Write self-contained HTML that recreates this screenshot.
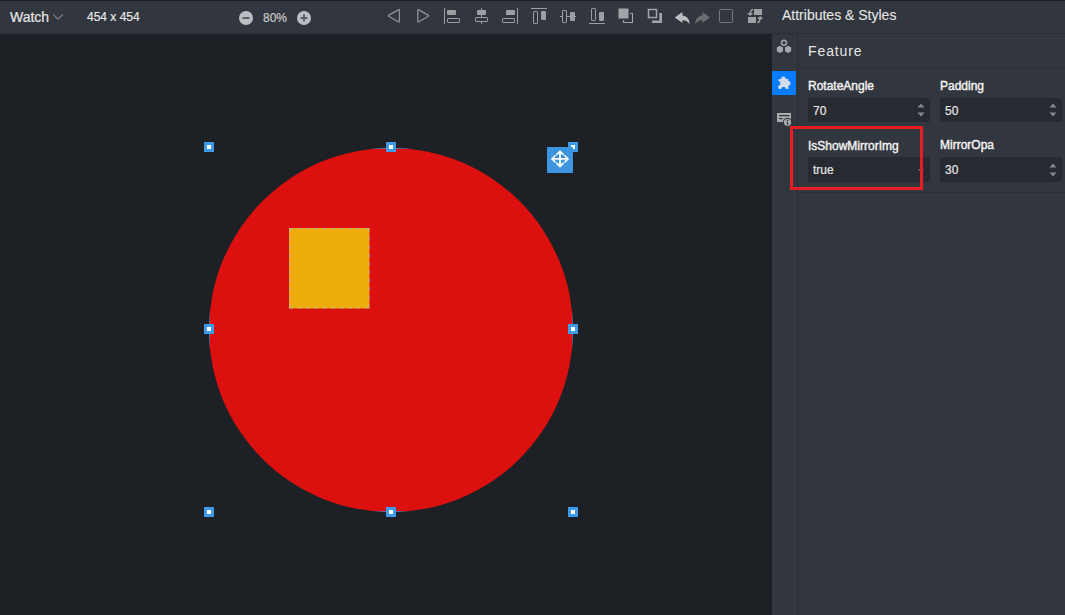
<!DOCTYPE html>
<html><head><meta charset="utf-8">
<style>
*{margin:0;padding:0;box-sizing:border-box}
html,body{width:1065px;height:615px;overflow:hidden;background:#1d2024;font-family:"Liberation Sans",sans-serif;position:relative}
.abs{position:absolute}
#topline{left:0;top:0;width:1065px;height:1px;background:#1e1e1c}
#toolbar{left:0;top:1px;width:1065px;height:32px;background:#32363e}
#tbsep{left:0;top:33px;width:1065px;height:1px;background:#2a2d33}
#canvas{left:0;top:34px;width:772px;height:581px;background:#1d2024}
#panel{left:772px;top:34px;width:293px;height:581px;background:#32363e}
#side{left:772px;top:34px;width:25px;height:581px;background:#32363e}
#sidediv{left:797px;top:34px;width:1px;height:581px;background:#2a2d33}
.txt{color:#e6e6e6;white-space:nowrap;-webkit-text-stroke:0.2px currentColor}
.handle{position:absolute;width:10px;height:10px;background:#3d9be9}
.handle::after{content:"";position:absolute;left:3px;top:3px;width:4px;height:4px;background:#fff}
.inp{position:absolute;width:122px;height:24.4px;background:#272a31;border-radius:2px}
.lbl{position:absolute;font-size:12px;color:#f4f4f4;white-space:nowrap;-webkit-text-stroke:0.4px currentColor}
.val{position:absolute;font-size:12px;color:#e6e6e6;white-space:nowrap;-webkit-text-stroke:0.2px currentColor;transform:scaleY(1.12);transform-origin:0 80%}
.hsep{position:absolute;left:798px;width:267px;height:1px;background:#2a2d33}
</style></head><body>
<div class="abs" id="topline"></div>
<div class="abs" id="toolbar"></div>
<div class="abs" id="tbsep"></div>
<div class="abs" id="canvas"></div>
<div class="abs" id="panel"></div>
<div class="abs" id="side"></div>
<div class="abs" id="sidediv"></div>

<!-- toolbar texts -->
<div class="abs txt" style="left:10px;top:9px;font-size:14px;line-height:16px">Watch</div>
<svg class="abs" style="left:52px;top:13px" width="12" height="8" viewBox="0 0 12 8"><path d="M1.2 1.4 L6 6.2 L10.8 1.4" stroke="#7e8186" stroke-width="1.25" fill="none"/></svg>
<div class="abs txt" style="left:87px;top:10px;font-size:12px;line-height:14px">454 x 454</div>
<svg class="abs" style="left:239px;top:11px" width="14" height="14" viewBox="0 0 14 14"><circle cx="7" cy="7" r="7" fill="#bcbec4"/><rect x="3.5" y="6" width="7" height="2" fill="#5a5d63"/></svg>
<div class="abs txt" style="left:263px;top:11px;font-size:12px;line-height:14px;color:#c8c8c8">80%</div>
<svg class="abs" style="left:297px;top:11px" width="14" height="14" viewBox="0 0 14 14"><circle cx="7" cy="7" r="7" fill="#bcbec4"/><rect x="3.5" y="6" width="7" height="2" fill="#5a5d63"/><rect x="6" y="3.5" width="2" height="7" fill="#5a5d63"/></svg>


<svg class="abs" style="left:0;top:0" width="1065" height="34" viewBox="0 0 1065 34">
<g fill="none" stroke="#909296" stroke-width="1.3" stroke-linejoin="round">
<path d="M389.03 16.45 Q387.9 15.8 389.03 15.15 L398.27 9.85 Q399.4 9.2 399.40 10.50 L399.40 21.10 Q399.4 22.4 398.27 21.75 Z"/>
<path d="M418.93 9.85 Q417.8 9.2 417.80 10.50 L417.80 21.10 Q417.8 22.4 418.93 21.75 L428.07 16.45 Q429.2 15.8 428.07 15.15 Z"/>
</g>
<g fill="#9c9ea2">
<rect x="444" y="8" width="1" height="16"/>
<rect x="447" y="10" width="9" height="5" rx="1"/>
<rect x="481" y="8" width="1" height="16"/>
<rect x="477" y="10" width="9" height="5" rx="1"/>
<rect x="517" y="8" width="1" height="16"/>
<rect x="506" y="10" width="9" height="5" rx="1"/>
<rect x="531" y="8" width="16" height="1"/>
<rect x="541" y="11" width="5" height="9" rx="1"/>
<rect x="560" y="16" width="16" height="1"/>
<rect x="570" y="12" width="5" height="9" rx="1"/>
<rect x="589" y="23" width="16" height="1"/>
<rect x="599" y="12" width="5" height="9" rx="1"/>
</g>
<g fill="#32363e" stroke="#9c9ea2" stroke-width="1">
<rect x="447.5" y="18.5" width="12" height="4" rx="0.6"/>
<rect x="475.5" y="17.5" width="12" height="4" rx="0.6"/>
<rect x="502.5" y="18.5" width="12" height="4" rx="0.6"/>
<rect x="533.5" y="11.5" width="4" height="12" rx="0.6"/>
<rect x="562.5" y="10.5" width="4" height="12" rx="0.6"/>
<rect x="591.5" y="8.5" width="4" height="12" rx="0.6"/>
</g>
<rect x="618.5" y="8.5" width="10" height="10" fill="#a2a4a8"/>
<path d="M630.2 13.5 H632.5 V22.5 H623.5 V20" fill="none" stroke="#a2a4a8" stroke-width="1.1"/>
<rect x="648.5" y="9.5" width="8" height="8" fill="none" stroke="#a2a4a8" stroke-width="1.5"/>
<path d="M659.3 13 H662 V23 H652 V20.4 H659.3 Z" fill="#a2a4a8"/>
<path d="M674.8 17.4 L682.4 11.9 L682.4 15.5 C686.5 15.8 689.6 19 689.6 24.2 C688 21.6 686 20.3 682.4 20.2 L682.4 23 Z" fill="#bdbec2"/>
<path d="M710 17.4 L702.4 11.9 L702.4 15.5 C698.3 15.8 695.2 19 695.2 24.2 C696.8 21.6 698.8 20.3 702.4 20.2 L702.4 23 Z" fill="#6b6c70"/>
<rect x="719.5" y="9.5" width="13" height="13" rx="1" fill="none" stroke="#76777b" stroke-width="1"/>
<g fill="#a0a1a5">
<rect x="754" y="9" width="8" height="6"/>
<rect x="748" y="17" width="8" height="6"/>
<path d="M747 13 L753.3 13 L750.1 16.1 Z M763.3 19 L757 19 L760.2 15.9 Z"/>
<path d="M752.9 9.1 Q750.4 10.4 750.1 13.3 M757.5 22.9 Q760 21.6 760.2 18.7" fill="none" stroke="#a0a1a5" stroke-width="1.6"/>
</g>
</svg>

<div class="abs txt" style="left:782px;top:7px;font-size:14px;line-height:16px;-webkit-text-stroke:0.1px">Attributes &amp; Styles</div>

<!-- panel -->
<div class="hsep" style="top:68px"></div>
<div class="abs txt" style="left:808px;top:43px;font-size:14px;line-height:16px;letter-spacing:0.9px;-webkit-text-stroke:0">Feature</div>

<svg class="abs" style="left:772px;top:34px" width="26" height="100" viewBox="772 34 26 100">
<g fill="#a6a7aa">
<path d="M784 39.2 L787.1 41 L787.1 44.5 L784 46.3 L780.9 44.5 L780.9 41 Z M784 40.9 L785.6 41.8 L785.6 43.7 L784 44.6 L782.4 43.7 L782.4 41.8 Z" fill-rule="evenodd"/>
<path d="M779.9 45.8 L783 47.6 L783 51.2 L779.9 53 L776.8 51.2 L776.8 47.6 Z"/>
<path d="M788.1 45.8 L791.2 47.6 L791.2 51.2 L788.1 53 L785 51.2 L785 47.6 Z"/>
</g>
<rect x="772" y="71" width="24" height="24" fill="#087cfa"/>
<path fill="#d3dcea" d="M778.5 79.3 L781.3 78.7 C780.9 75.9 785.9 75.9 785.5 78.7 L788.2 78.9 L788.3 81.0 C791.3 80.6 791.3 86.0 788.3 85.6 L788.6 88.8 L785.8 88.9 C785.9 86.4 781.1 86.4 781.2 88.9 L778.2 88.7 L778.3 85.7 C781.0 86.0 781.0 80.8 778.3 81.1 Z"/>
<rect x="777" y="113" width="14" height="9" fill="#a9aaad"/>
<rect x="779" y="115" width="10.5" height="1.2" fill="#32363e"/>
<rect x="779" y="118" width="3.8" height="1.2" fill="#32363e"/>
<circle cx="787.5" cy="122.3" r="4.6" fill="#32363e"/>
<circle cx="787.5" cy="122.3" r="3.6" fill="#a9aaad"/>
<circle cx="787.5" cy="120.2" r="0.8" fill="#32363e"/>
<rect x="786.9" y="121.6" width="1.2" height="3.6" fill="#32363e"/>
</svg>


<div class="lbl" style="left:808px;top:79px">RotateAngle</div>
<div class="inp" style="left:808px;top:98px"></div>
<div class="val" style="left:813px;top:104px">70</div>
<div class="lbl" style="left:940px;top:79px">Padding</div>
<div class="inp" style="left:940px;top:98px"></div>
<div class="val" style="left:945px;top:104px">50</div>

<div class="lbl" style="left:808px;top:139px">IsShowMirrorImg</div>
<div class="inp" style="left:808px;top:157.4px"></div>
<div class="val" style="left:813px;top:163px">true</div>
<div class="lbl" style="left:940px;top:138px">MirrorOpa</div>
<div class="inp" style="left:940px;top:157.4px"></div>
<div class="val" style="left:945px;top:163px">30</div>
<div class="hsep" style="top:192px"></div>
<svg class="abs" style="left:917px;top:103px" width="8" height="16" viewBox="0 0 8 16"><path d="M0.5 4.5 L4 0.5 L7.5 4.5 Z M0.5 9.5 L7.5 9.5 L4 13.5 Z" fill="#85878c"/></svg>
<svg class="abs" style="left:1049px;top:103px" width="8" height="16" viewBox="0 0 8 16"><path d="M0.5 4.5 L4 0.5 L7.5 4.5 Z M0.5 9.5 L7.5 9.5 L4 13.5 Z" fill="#85878c"/></svg>
<svg class="abs" style="left:1049px;top:162.5px" width="8" height="16" viewBox="0 0 8 16"><path d="M0.5 4.5 L4 0.5 L7.5 4.5 Z M0.5 9.5 L7.5 9.5 L4 13.5 Z" fill="#85878c"/></svg>
<svg class="abs" style="left:917px;top:167.5px" width="8" height="6" viewBox="0 0 8 6"><path d="M1 1 L7 1 L4 4.5 Z" fill="#6e7075"/></svg>


<div class="abs" style="left:790px;top:126px;width:133px;height:64px;border:3px solid #e81c24"></div>

<!-- canvas objects -->
<svg class="abs" style="left:0;top:0" width="772" height="615" viewBox="0 0 772 615">
<defs><clipPath id="cc"><circle cx="391" cy="330" r="182"/></clipPath></defs>
<circle cx="391" cy="330" r="182" fill="#dd1010"/>
<rect x="209.5" y="148.5" width="363" height="363" fill="none" stroke="#3d9be9" stroke-width="1" clip-path="url(#cc)"/>
<rect x="289" y="228" width="80.4" height="80.4" fill="#eeab0c"/>
<path d="M289 228.5 H369.4 M368.9 228 V308.4 M289 307.9 H369.4 M289.5 228 V308.4" fill="none" stroke="#bdb68c" stroke-width="1" stroke-dasharray="4.4 4"/>
</svg>


<div class="handle" style="left:204px;top:142px"></div>
<div class="handle" style="left:386px;top:142px"></div>
<div class="handle" style="left:568px;top:142px"></div>
<div class="handle" style="left:204px;top:324px"></div>
<div class="handle" style="left:568px;top:324px"></div>
<div class="handle" style="left:204px;top:507px"></div>
<div class="handle" style="left:386px;top:507px"></div>
<div class="handle" style="left:568px;top:507px"></div>
<svg class="abs" style="left:547px;top:147px" width="26" height="26" viewBox="0 0 26 26">
<rect width="26" height="26" fill="#3d95e0"/>
<g stroke="#fff" stroke-width="1.6" fill="none" stroke-linecap="butt" stroke-linejoin="miter">
<path d="M13 4.8 V19 M5.6 11.9 H20.4" stroke-width="1.9"/>
<path d="M9.4 7.9 L13 4.3 L16.6 7.9"/>
<path d="M9.4 15.9 L13 19.5 L16.6 15.9"/>
<path d="M8.6 8.3 L5 11.9 L8.6 15.5"/>
<path d="M17.4 8.3 L21 11.9 L17.4 15.5"/>
</g>
</svg>
</body></html>
